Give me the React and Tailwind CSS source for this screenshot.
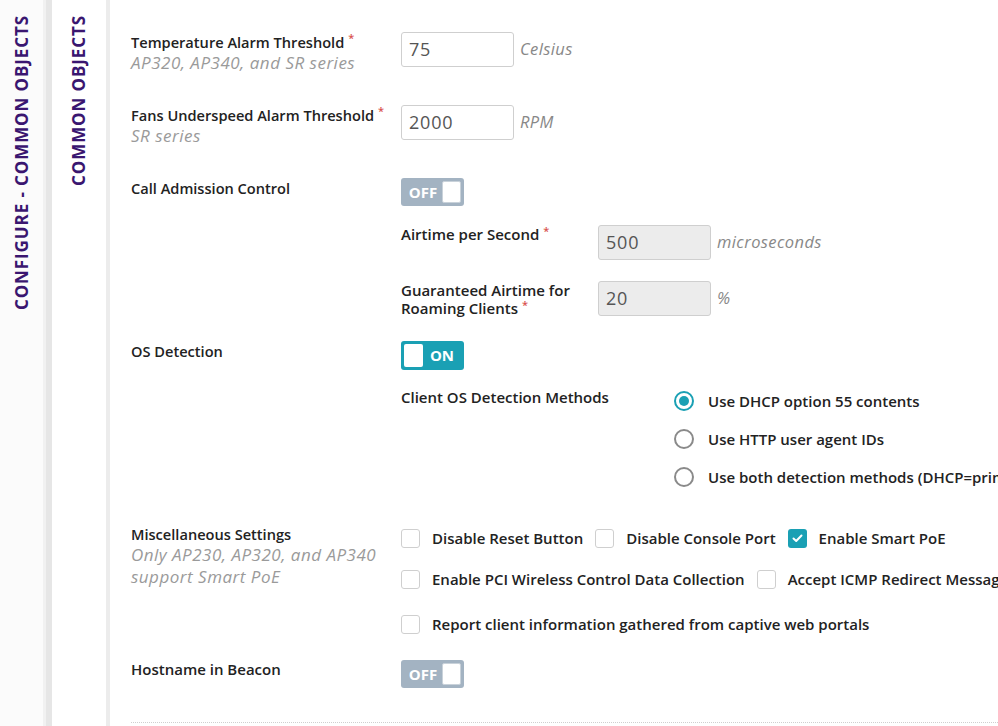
import React from 'react';

const font = { fontFamily: '"Open Sans", "Liberation Sans", sans-serif' };

function Req() {
    return <span className="ml-1 align-top text-[11px] leading-none text-[#d9534f]">*</span>;
}

function Toggle({ on }) {
    if (on) {
        return (
            <div className="flex h-[29px] w-[63px] items-center rounded-[3px] bg-[#1aa0b4] p-[3px]">
                <div className="h-full w-[19px] rounded-[2px] bg-white" />
                <span className="flex-1 text-center text-[15px] font-bold text-white">ON</span>
            </div>
        );
    }
    return (
        <div className="flex h-[28px] w-[63px] items-center rounded-[3px] bg-[#a3b3c2] p-[3px]">
            <span className="flex-1 text-center text-[15px] font-bold text-white">OFF</span>
            <div className="h-full w-[19px] rounded-[2px] border border-[#c9d2da] bg-white" />
        </div>
    );
}

function NumInput({ value, disabled }) {
    return (
        <div
            className={
                'flex h-[35px] w-[113px] shrink-0 items-center rounded-[3px] border border-[#cfcfcf] px-[7px] text-[18px] tracking-[0.8px] text-[#555] ' +
                (disabled ? 'bg-[#ececec]' : 'bg-white')
            }
        >
            {value}
        </div>
    );
}

function Unit({ children }) {
    return <span className="ml-[6px] text-[16.5px] italic tracking-[0.4px] text-[#888]">{children}</span>;
}

function Checkbox({ checked, label }) {
    return (
        <div className="flex h-[19px] items-center">
            {checked ? (
                <div className="flex h-[19px] w-[19px] shrink-0 items-center justify-center rounded-[3px] bg-[#1aa0b4]">
                    <svg width="11" height="9" viewBox="0 0 11 9" fill="none">
                        <path d="M1.5 4.5 L4.2 7 L9.5 1.5" stroke="white" strokeWidth="2" strokeLinecap="round" strokeLinejoin="round" />
                    </svg>
                </div>
            ) : (
                <div className="h-[19px] w-[19px] shrink-0 rounded-[3px] border border-[#cfcfcf] bg-white" />
            )}
            <span className="ml-[12px] text-[15px] font-semibold text-[#222]">{label}</span>
        </div>
    );
}

function Radio({ checked, label }) {
    return (
        <div className="flex h-[20px] items-center">
            {checked ? (
                <div className="flex h-[20px] w-[20px] shrink-0 items-center justify-center rounded-full border-2 border-[#1aa0b4]">
                    <div className="h-[10px] w-[10px] rounded-full bg-[#1aa0b4]" />
                </div>
            ) : (
                <div className="h-[20px] w-[20px] shrink-0 rounded-full border-2 border-[#8a8a8a]" />
            )}
            <span className="ml-[14px] whitespace-nowrap text-[15px] font-semibold text-[#222]">{label}</span>
        </div>
    );
}

function Label({ children, sub }) {
    return (
        <div className="w-[270px] shrink-0">
            <div className="text-[14.6px] leading-[20px] font-semibold text-[#222]">{children}</div>
            {sub && <div className="text-[17px] leading-[22px] italic tracking-[0.5px] text-[#9a9a9a]">{sub}</div>}
        </div>
    );
}

function SubLabel({ children, w }) {
    return <div className={'shrink-0 text-[15px] leading-[18px] font-semibold text-[#222] ' + w}>{children}</div>;
}

function SideTab({ text }) {
    return (
        <div className="flex flex-col items-center pt-[15px]">
            <div className="rotate-180 whitespace-nowrap text-[17px] font-bold tracking-[0.9px] text-[#3a1670] [writing-mode:vertical-rl]">
                {text}
            </div>
        </div>
    );
}

export default function App() {
    return (
        <div className="flex h-[726px] w-[998px] overflow-hidden bg-white" style={font}>
            <div className="w-[43px] shrink-0 bg-[#fbfbfb]">
                <SideTab text="CONFIGURE - COMMON OBJECTS" />
            </div>
            <div className="flex w-[9px] shrink-0">
                <div className="w-[3px] bg-[#f1f1f1]" />
                <div className="w-[6px] bg-[#e6e6e6]" />
            </div>
            <div className="w-[54px] shrink-0 bg-white">
                <SideTab text="COMMON OBJECTS" />
            </div>
            <div className="w-[4px] shrink-0 bg-[#ececec]" />

            <div className="min-w-0 flex-1 pl-[21px] pt-[32px]">
                {/* temperature */}
                <div className="flex h-[73px] items-start">
                    <Label sub="AP320, AP340, and SR series">
                        Temperature Alarm Threshold<Req />
                    </Label>
                    <div className="flex items-center">
                        <NumInput value="75" />
                        <Unit>Celsius</Unit>
                    </div>
                </div>

                {/* fans */}
                <div className="flex h-[73px] items-start">
                    <Label sub="SR series">
                        Fans Underspeed Alarm Threshold<Req />
                    </Label>
                    <div className="flex items-center">
                        <NumInput value="2000" />
                        <Unit>RPM</Unit>
                    </div>
                </div>

                {/* call admission */}
                <div className="flex h-[163px] items-start">
                    <Label>Call Admission Control</Label>
                    <div>
                        <Toggle />
                        <div className="mt-[19px] flex h-[35px] items-start">
                            <SubLabel w="w-[197px]">
                                Airtime per Second<Req />
                            </SubLabel>
                            <div className="flex items-center">
                                <NumInput value="500" disabled />
                                <Unit>microseconds</Unit>
                            </div>
                        </div>
                        <div className="mt-[21px] flex items-start">
                            <SubLabel w="w-[197px]">
                                Guaranteed Airtime for
                                <br />
                                Roaming Clients<Req />
                            </SubLabel>
                            <div className="flex items-center">
                                <NumInput value="20" disabled />
                                <Unit>%</Unit>
                            </div>
                        </div>
                    </div>
                </div>

                {/* os detection */}
                <div className="flex h-[183px] items-start">
                    <Label>OS Detection</Label>
                    <div>
                        <Toggle on />
                        <div className="mt-[18px] flex items-start">
                            <SubLabel w="w-[273px]">Client OS Detection Methods</SubLabel>
                            <div className="flex flex-col gap-[18px] pt-[3px]">
                                <Radio checked label="Use DHCP option 55 contents" />
                                <Radio label="Use HTTP user agent IDs" />
                                <Radio label="Use both detection methods (DHCP=primary, HTTP=secondary)" />
                            </div>
                        </div>
                    </div>
                </div>

                {/* misc */}
                <div className="flex h-[136px] items-start">
                    <Label sub={<>Only AP230, AP320, and AP340<br />support Smart PoE</>}>
                        Miscellaneous Settings
                    </Label>
                    <div className="flex flex-col pt-[5px]">
                        <div className="flex items-center gap-[12px] whitespace-nowrap">
                            <Checkbox label="Disable Reset Button" />
                            <Checkbox label="Disable Console Port" />
                            <Checkbox checked label="Enable Smart PoE" />
                        </div>
                        <div className="mt-[22px] flex items-center gap-[12px] whitespace-nowrap">
                            <Checkbox label="Enable PCI Wireless Control Data Collection" />
                            <Checkbox label="Accept ICMP Redirect Messages" />
                        </div>
                        <div className="mt-[26px] flex items-center whitespace-nowrap">
                            <Checkbox label="Report client information gathered from captive web portals" />
                        </div>
                    </div>
                </div>

                {/* hostname */}
                <div className="flex h-[62px] items-start">
                    <SubLabel w="w-[270px]">Hostname in Beacon</SubLabel>
                    <Toggle />
                </div>

                <div className="border-t border-dotted border-[#cfcfcf]" />
            </div>
        </div>
    );
}
